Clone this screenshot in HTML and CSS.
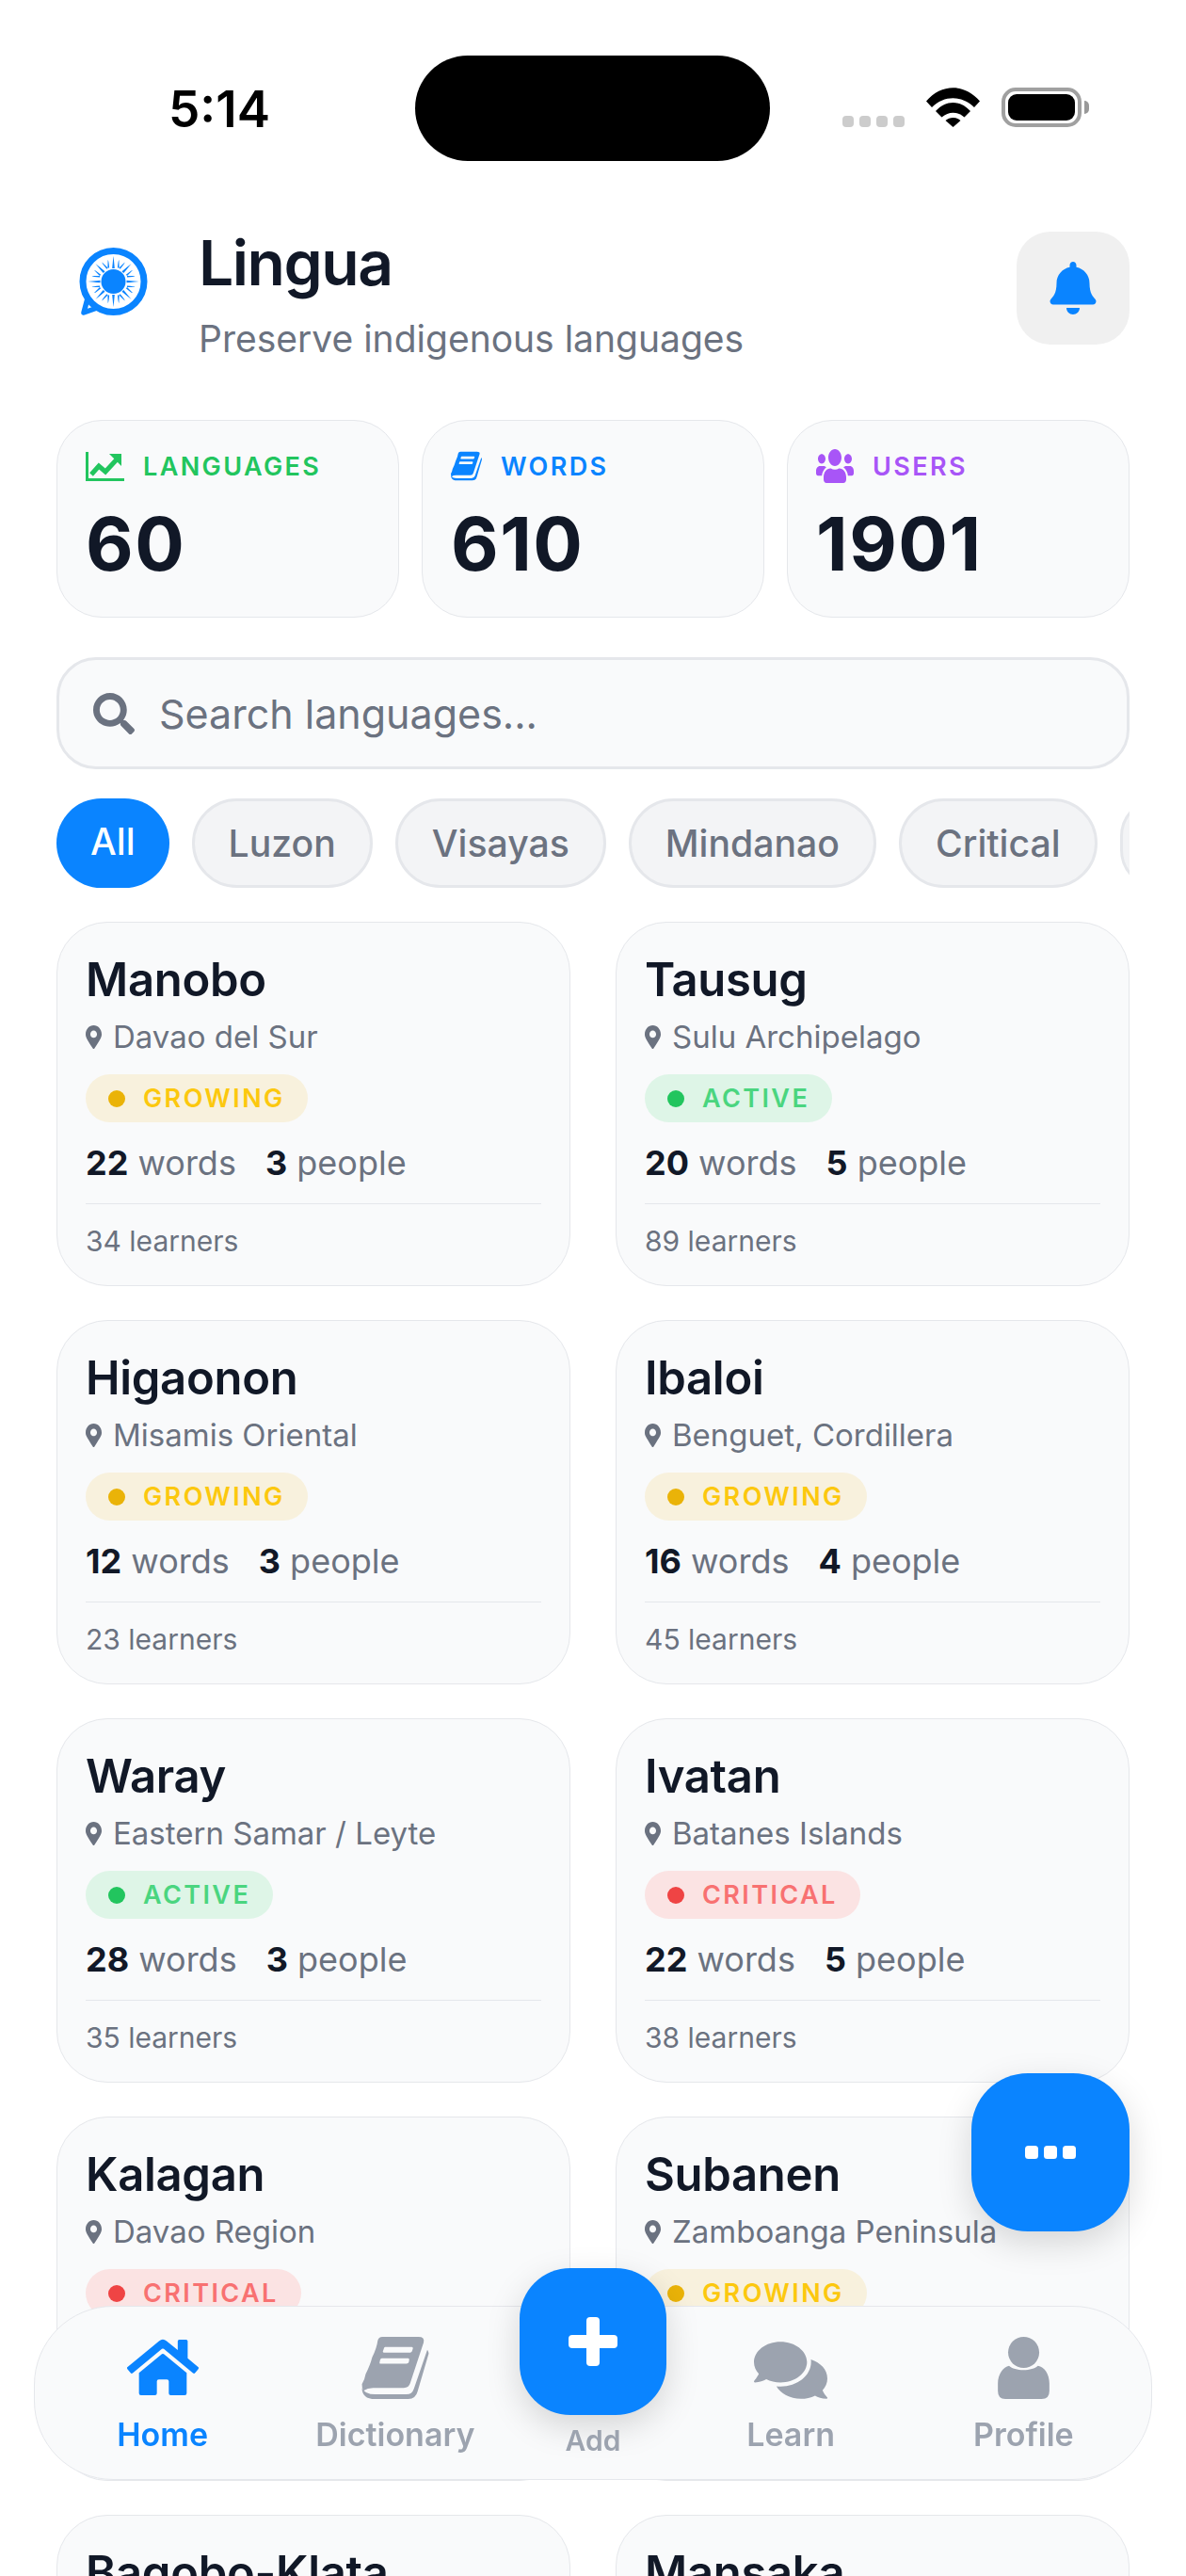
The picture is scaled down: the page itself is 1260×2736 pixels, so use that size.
FILE: index.html
```html
<!DOCTYPE html>
<html lang="en">
<head>
    <meta charset="UTF-8">
    <meta name="viewport" content="width=device-width, initial-scale=1.0">
    <title>Lingua</title>
    <link rel="stylesheet" href="styles.css">
</head>
<body>
    <!-- Shared icons -->
    <svg class="icon-defs" aria-hidden="true">
        <symbol id="icon-book" viewBox="0 0 72 67">
            <path fill="currentColor" fill-rule="evenodd" d="M22 0H61Q68 0 66.500 6L52 50Q50.500 55 45 55H12Q6 55 1.500 58Q0 56 0 51Q3 46 4 40Q9 30 11 22Q16 12 17 4Q18 0 22 0ZM25 11Q24 11 23.500 13L22.500 16Q22.500 17 24 17H52Q53.500 17 54 15.500L55 12.500Q55 11 53.500 11ZM21.500 23Q20 23 19.500 25L19 28Q18.500 29 20 29H48Q50 29 50.500 27.500L51 24.500Q51 23 49.500 23Z"/>
            <path fill="currentColor" d="M70.500 14Q72 16 72 18L60 59Q58 67 50 67H14Q0 67 0 55Q3 62 14 62H48Q54 62 56 56Z"/>
        </symbol>
        <symbol id="icon-pin" viewBox="0 0 384 512" preserveAspectRatio="none">
            <path fill="currentColor" d="M172.268 501.67C26.97 291.031 0 262.429 0 192 0 85.961 85.961 0 192 0s192 85.961 192 192c0 70.429-26.97 99.031-172.268 309.67-9.535 13.774-29.93 13.773-39.464 0zM192 272c44.183 0 80-35.817 80-80s-35.817-80-80-80-80 35.817-80 80 35.817 80 80 80z"/>
        </symbol>
    </svg>

    <div class="status-bar">
        <div class="time">5:14</div>
        <div class="island"></div>
        <div class="status-icons">
            <div class="signal"><span></span><span></span><span></span><span></span></div>
            <svg class="wifi" viewBox="0 0 57 42">
                <path d="M0 14.500C16 -4.500 41 -4.500 57 14.500L51 21C38 8 19 8 6 21Z"/>
                <path d="M10 25C21 13 36 13 47 25L40.500 31.500C33 25 24 25 16.500 31.500Z"/>
                <path d="M20.500 35C25 31 32 31 36.500 35L28.500 42Z"/>
            </svg>
            <div class="battery"><div class="battery-fill"></div></div>
            <div class="battery-nub"></div>
        </div>
    </div>

    <div class="page">
        <header class="app-header">
            <div class="logo">
                <svg viewBox="0 0 74 72" width="74" height="72">
                    <path d="M10 54L6 69L23 63" fill="#fff" stroke="#0a84ff" stroke-width="5.500" stroke-linejoin="round"/>
                    <circle cx="37.500" cy="36" r="32.500" fill="#fff" stroke="#0a84ff" stroke-width="7"/>
                    <circle cx="37.500" cy="36" r="13" fill="#0a84ff"/>
                    <g fill="#0a84ff">
                        <g id="sun-rays">
                            <path d="M36.200 22Q37 13 37.500 9Q38 13 38.800 22Z"/>
                            <path d="M31.400 21.500L31.600 13Q32.600 14 33.100 21.500Z"/>
                            <path d="M43.600 21.500L43.400 13Q42.400 14 41.900 21.500Z"/>
                        </g>
                        <use href="#sun-rays" transform="rotate(45 37.500 36)"/>
                        <use href="#sun-rays" transform="rotate(90 37.500 36)"/>
                        <use href="#sun-rays" transform="rotate(135 37.500 36)"/>
                        <use href="#sun-rays" transform="rotate(180 37.500 36)"/>
                        <use href="#sun-rays" transform="rotate(225 37.500 36)"/>
                        <use href="#sun-rays" transform="rotate(270 37.500 36)"/>
                        <use href="#sun-rays" transform="rotate(315 37.500 36)"/>
                    </g>
                </svg>
            </div>
            <div class="brand">
                <h1>Lingua</h1>
                <p>Preserve indigenous languages</p>
            </div>
            <button class="bell-btn">
                <svg viewBox="0 0 448 512" width="50" height="56">
                    <path fill="#0a84ff" d="M224 512c35.320 0 63.970-28.650 63.970-64H160.030c0 35.350 28.650 64 63.970 64zm215.390-149.710c-19.320-20.760-55.470-51.990-55.470-154.290 0-77.700-54.480-139.900-127.940-155.160V32c0-17.670-14.320-32-31.980-32s-31.980 14.330-31.980 32v20.840C118.560 68.100 64.080 130.300 64.080 208c0 102.300-36.150 133.530-55.470 154.290-6 6.450-8.660 14.160-8.610 21.710.110 16.400 12.980 32 32.100 32h383.800c19.120 0 32-15.600 32.100-32 .050-7.550-2.610-15.270-8.610-21.710z"/>
                </svg>
            </button>
        </header>

        <div class="stats">
            <div class="stat-card">
                <div class="stat-label green">
                    <svg class="icon-chart" viewBox="0 0 41 31">
                        <path d="M1.500 0V29.500H41" fill="none" stroke="currentColor" stroke-width="3"/>
                        <path d="M6 24L14 15L21 21L33 8" fill="none" stroke="currentColor" stroke-width="5"/>
                        <path d="M25 2H38V15Z" fill="currentColor"/>
                    </svg>
                    LANGUAGES
                </div>
                <div class="stat-value">60</div>
            </div>
            <div class="stat-card">
                <div class="stat-label blue">
                    <svg class="icon-words"><use href="#icon-book"/></svg>
                    WORDS
                </div>
                <div class="stat-value">610</div>
            </div>
            <div class="stat-card">
                <div class="stat-label purple">
                    <svg class="icon-users" viewBox="0 32 640 448" preserveAspectRatio="none">
                        <path fill="currentColor" d="M96 224c35.300 0 64-28.700 64-64s-28.700-64-64-64-64 28.700-64 64 28.700 64 64 64zm448 0c35.300 0 64-28.700 64-64s-28.700-64-64-64-64 28.700-64 64 28.700 64 64 64zm32 32h-64c-17.600 0-33.500 7.100-45.100 18.600 40.300 22.100 68.900 62 75.100 109.400h66c17.700 0 32-14.300 32-32v-32c0-35.300-28.700-64-64-64zm-256 0c61.900 0 112-50.100 112-112S381.900 32 320 32 208 82.100 208 144s50.100 112 112 112zm76.800 32h-8.300c-20.800 10-43.900 16-68.500 16s-47.600-6-68.500-16h-8.300C179.600 288 128 339.600 128 403.200V432c0 26.500 21.500 48 48 48h288c26.500 0 48-21.500 48-48v-28.800c0-63.600-51.600-115.200-115.200-115.200zm-223.700-13.400C161.500 263.100 145.600 256 128 256H64c-35.300 0-64 28.700-64 64v32c0 17.700 14.300 32 32 32h65.900c6.300-47.400 34.900-87.300 75.200-109.400z"/>
                    </svg>
                    USERS
                </div>
                <div class="stat-value">1901</div>
            </div>
        </div>

        <div class="search">
            <svg viewBox="0 0 512 512" width="44" height="44">
                <path fill="#6b7280" d="M505 442.700L405.300 343c-4.500-4.500-10.600-7-17-7H372c27.600-35.300 44-79.700 44-128C416 93.100 322.900 0 208 0S0 93.100 0 208s93.100 208 208 208c48.300 0 92.700-16.400 128-44v16.300c0 6.400 2.500 12.500 7 17l99.700 99.700c9.400 9.400 24.600 9.400 33.900 0l28.300-28.300c9.400-9.400 9.400-24.600.1-34zM208 336c-70.700 0-128-57.200-128-128 0-70.700 57.200-128 128-128 70.700 0 128 57.200 128 128 0 70.700-57.200 128-128 128z"/>
            </svg>
            <span>Search languages...</span>
        </div>

        <div class="filters">
            <div class="pill active">All</div>
            <div class="pill">Luzon</div>
            <div class="pill">Visayas</div>
            <div class="pill">Mindanao</div>
            <div class="pill">Critical</div>
            <div class="pill"></div>
        </div>

        <div class="lang-grid">
            <div class="lang-card">
                <h3>Manobo</h3>
                <div class="place"><svg><use href="#icon-pin"/></svg>Davao del Sur</div>
                <div class="badge growing"><i></i>GROWING</div>
                <div class="counts"><span><b>22</b> words</span><span><b>3</b> people</span></div>
                <div class="learners">34 learners</div>
            </div>
            <div class="lang-card">
                <h3>Tausug</h3>
                <div class="place"><svg><use href="#icon-pin"/></svg>Sulu Archipelago</div>
                <div class="badge active"><i></i>ACTIVE</div>
                <div class="counts"><span><b>20</b> words</span><span><b>5</b> people</span></div>
                <div class="learners">89 learners</div>
            </div>
            <div class="lang-card">
                <h3>Higaonon</h3>
                <div class="place"><svg><use href="#icon-pin"/></svg>Misamis Oriental</div>
                <div class="badge growing"><i></i>GROWING</div>
                <div class="counts"><span><b>12</b> words</span><span><b>3</b> people</span></div>
                <div class="learners">23 learners</div>
            </div>
            <div class="lang-card">
                <h3>Ibaloi</h3>
                <div class="place"><svg><use href="#icon-pin"/></svg>Benguet, Cordillera</div>
                <div class="badge growing"><i></i>GROWING</div>
                <div class="counts"><span><b>16</b> words</span><span><b>4</b> people</span></div>
                <div class="learners">45 learners</div>
            </div>
            <div class="lang-card">
                <h3>Waray</h3>
                <div class="place"><svg><use href="#icon-pin"/></svg>Eastern Samar / Leyte</div>
                <div class="badge active"><i></i>ACTIVE</div>
                <div class="counts"><span><b>28</b> words</span><span><b>3</b> people</span></div>
                <div class="learners">35 learners</div>
            </div>
            <div class="lang-card">
                <h3>Ivatan</h3>
                <div class="place"><svg><use href="#icon-pin"/></svg>Batanes Islands</div>
                <div class="badge critical"><i></i>CRITICAL</div>
                <div class="counts"><span><b>22</b> words</span><span><b>5</b> people</span></div>
                <div class="learners">38 learners</div>
            </div>
            <div class="lang-card">
                <h3>Kalagan</h3>
                <div class="place"><svg><use href="#icon-pin"/></svg>Davao Region</div>
                <div class="badge critical"><i></i>CRITICAL</div>
                <div class="counts"></div>
                <div class="learners"></div>
            </div>
            <div class="lang-card">
                <h3>Subanen</h3>
                <div class="place"><svg><use href="#icon-pin"/></svg>Zamboanga Peninsula</div>
                <div class="badge growing"><i></i>GROWING</div>
                <div class="counts"></div>
                <div class="learners"></div>
            </div>
            <div class="lang-card">
                <h3>Bagobo-Klata</h3>
            </div>
            <div class="lang-card">
                <h3>Mansaka</h3>
            </div>
        </div>
    </div>

    <button class="more-btn">
        <svg viewBox="0 0 54 14" width="54" height="14">
            <rect width="14" height="14" rx="3.500"/>
            <rect x="20" width="14" height="14" rx="3.500"/>
            <rect x="40" width="14" height="14" rx="3.500"/>
        </svg>
    </button>

    <nav class="bottom-nav">
        <div class="nav-item current">
            <svg class="nav-home" viewBox="0 32 576 448">
                <path fill="currentColor" d="M280.370 148.260L96 300.110V464a16 16 0 0 0 16 16l112.060-.29a16 16 0 0 0 15.920-16V368a16 16 0 0 1 16-16h64a16 16 0 0 1 16 16v95.640a16 16 0 0 0 16 16.050L464 480a16 16 0 0 0 16-16V300L295.670 148.260a12.190 12.190 0 0 0-15.300 0zM571.600 251.470L488 182.560V44.050a12 12 0 0 0-12-12h-56a12 12 0 0 0-12 12v72.610L318.470 43a48 48 0 0 0-61 0L4.340 251.470a12 12 0 0 0-1.600 16.900l25.500 31A12 12 0 0 0 45.150 301l235.220-193.740a12.190 12.190 0 0 1 15.300 0L530.900 301a12 12 0 0 0 16.900-1.600l25.500-31a12 12 0 0 0-1.700-16.930z"/>
            </svg>
            <span>Home</span>
        </div>
        <div class="nav-item">
            <svg class="nav-book"><use href="#icon-book"/></svg>
            <span>Dictionary</span>
        </div>
        <div class="nav-item add">
            <button class="add-btn">
                <svg viewBox="0 0 52 52" width="52" height="52">
                    <rect x="19" width="14" height="52" rx="4"/>
                    <rect y="19" width="52" height="14" rx="4"/>
                </svg>
            </button>
            <span>Add</span>
        </div>
        <div class="nav-item">
            <svg class="nav-learn" viewBox="0 32 576 448">
                <path fill="currentColor" d="M416 192c0-88.400-93.100-160-208-160S0 103.600 0 192c0 34.300 14.100 65.900 38 92-13.400 30.200-35.500 54.200-35.800 54.500-2.200 2.300-2.800 5.700-1.500 8.700S4.800 352 8 352c36.600 0 66.900-12.300 88.700-25 32.200 15.700 70.300 25 111.300 25 114.900 0 208-71.600 208-160zm122 220c23.900-26 38-57.700 38-92 0-66.900-53.500-124.200-129.300-148.100.9 6.600 1.300 13.300 1.300 20.100 0 105.900-107.700 192-240 192-10.800 0-21.300-.8-31.700-1.900C207.800 439.600 281.800 480 368 480c41 0 79.100-9.200 111.300-25 21.800 12.700 52.100 25 88.700 25 3.200 0 6.100-1.900 7.300-4.800 1.300-3 .7-6.400-1.500-8.700-.3-.3-22.400-24.200-35.800-54.500z"/>
            </svg>
            <span>Learn</span>
        </div>
        <div class="nav-item">
            <svg class="nav-user" viewBox="0 0 55.300 66.700">
                <circle cx="27.700" cy="16.700" r="16.700" fill="currentColor"/>
                <path fill="currentColor" d="M12 31C18 37 37 37 43 31C50 32 55.300 40 55.300 50V58Q55.300 66.700 47 66.700H8Q0 66.700 0 58V50C0 40 6 32 12 31Z"/>
            </svg>
            <span>Profile</span>
        </div>
    </nav>
</body>
</html>
```

FILE: styles.css
```css
* {
    margin: 0;
    padding: 0;
    box-sizing: border-box;
    font-family: 'Inter', 'Liberation Sans', sans-serif;
}

html, body {
    height: 2736px;
    overflow: hidden;
    background-color: #fff;
}

.icon-defs {
    display: none;
}

/* Status bar */
.status-bar {
    display: flex;
    align-items: center;
    height: 112px;
    margin-top: 59px;
    margin-bottom: 75px;
    padding-left: 179px;
}

.time {
    width: 262px;
    padding-top: 2px;
    font-size: 53px;
    font-weight: 600;
    color: #000;
}

.island {
    width: 377px;
    height: 112px;
    border-radius: 56px;
    background-color: #000;
}

.status-icons {
    display: flex;
    align-items: flex-end;
    height: 42px;
    margin-left: 77px;
    margin-bottom: 2px;
}

.signal {
    display: flex;
    gap: 6px;
    margin-right: 23px;
}

.signal span {
    width: 12px;
    height: 12px;
    border-radius: 4px;
    background-color: #ccc;
}

.wifi {
    width: 57px;
    height: 42px;
    margin-right: 23px;
}

.battery {
    width: 85px;
    height: 42px;
    padding: 3px;
    border: 4px solid #a0a0a0;
    border-radius: 15px;
}

.battery-fill {
    height: 100%;
    border-radius: 9px;
    background-color: #000;
}

.battery-nub {
    align-self: center;
    width: 5px;
    height: 14px;
    margin-left: 3px;
    border-radius: 0 5px 5px 0;
    background-color: #999;
}

/* Page */
.page {
    padding: 0 60px;
}

.app-header {
    display: flex;
    height: 120px;
    margin-bottom: 80px;
}

.logo {
    flex: 0 0 120px;
    display: flex;
    justify-content: center;
    padding-top: 17px;
}

.brand {
    flex: 1;
    margin-left: 31px;
}

.brand h1 {
    margin-top: -7px;
    font-size: 66px;
    font-weight: 600;
    line-height: 80px;
    letter-spacing: -1.5px;
    color: #111827;
}

.brand p {
    margin-top: 17px;
    font-size: 39px;
    line-height: 48px;
    color: #6b7280;
}

.bell-btn {
    display: flex;
    align-items: center;
    justify-content: center;
    width: 120px;
    height: 120px;
    border: none;
    border-radius: 36px;
    background-color: #f0f0f0;
}

/* Stat cards */
.stats {
    display: grid;
    grid-template-columns: repeat(3, 1fr);
    gap: 24px;
    margin-bottom: 42px;
}

.stat-card {
    padding: 30px;
    border: 1.5px solid #e5e7eb;
    border-radius: 48px;
    background-color: #f9fafb;
}

.stat-label {
    display: flex;
    align-items: center;
    gap: 20px;
    height: 36px;
    font-size: 27px;
    font-weight: 600;
    letter-spacing: 2.4px;
}

.green { color: #22c55e; }
.blue { color: #0a84ff; }
.purple { color: #a855f7; }

.icon-chart {
    width: 41px;
    height: 31px;
}

.icon-words {
    width: 33px;
    height: 32px;
}

.icon-users {
    width: 40px;
    height: 36px;
}

.stat-value {
    margin-top: 18px;
    font-size: 78px;
    font-weight: 700;
    line-height: 94px;
    letter-spacing: 1.5px;
    color: #111827;
}

/* Search and filters */
.search {
    display: flex;
    align-items: center;
    gap: 26px;
    height: 119px;
    margin-bottom: 31px;
    padding-left: 36px;
    border: 3px solid #e5e7eb;
    border-radius: 42px;
    background-color: #f9fafb;
    font-size: 43px;
    color: #6b7280;
}

.filters {
    display: flex;
    gap: 24px;
    overflow: hidden;
    margin-bottom: 36px;
}

.pill {
    flex: none;
    display: flex;
    align-items: center;
    min-width: 80px;
    height: 95px;
    padding: 0 36px;
    border: 3px solid #e5e7eb;
    border-radius: 48px;
    background-color: #f3f4f6;
    font-size: 39.200px;
    font-weight: 500;
    color: #6b7280;
}

.pill.active {
    padding: 0 36px 5px;
    border: none;
    background-color: #0a84ff;
    color: #fff;
}

/* Language cards */
.lang-grid {
    display: grid;
    grid-template-columns: repeat(2, 1fr);
    gap: 36px 48px;
}

.lang-card {
    height: 387px;
    padding: 32px 30px 30px;
    border: 1.5px solid #e5e7eb;
    border-radius: 54px;
    background-color: #f9fafb;
}

.lang-card h3 {
    font-size: 49px;
    font-weight: 600;
    line-height: 58px;
    letter-spacing: -0.3px;
    color: #111827;
}

.place {
    display: flex;
    align-items: center;
    gap: 12px;
    margin-top: 9px;
    font-size: 33px;
    line-height: 44px;
    color: #6b7280;
}

.place svg {
    width: 17px;
    height: 25px;
}

.badge {
    display: inline-flex;
    align-items: center;
    gap: 19px;
    margin-top: 18px;
    padding: 9px 24px;
    border-radius: 26px;
    font-size: 27px;
    font-weight: 600;
    line-height: 33px;
    letter-spacing: 2.4px;
}

.badge i {
    width: 18px;
    height: 18px;
    border-radius: 50%;
}

.badge.growing {
    background-color: #f8f1dd;
    color: #fcc80e;
}

.badge.growing i {
    background-color: #eab308;
}

.badge.active {
    background-color: #def5e7;
    color: #4ad57f;
}

.badge.active i {
    background-color: #22c55e;
}

.badge.critical {
    background-color: #fbe3e3;
    color: #f87171;
}

.badge.critical i {
    background-color: #ef4444;
}

.counts {
    display: flex;
    gap: 31px;
    height: 47px;
    margin-top: 20px;
    font-size: 36px;
    line-height: 47px;
    color: #6b7280;
}

.counts b {
    font-weight: 700;
    color: #111827;
}

.learners {
    height: 58px;
    margin-top: 19px;
    padding-top: 21px;
    border-top: 1.5px solid #e5e7eb;
    font-size: 30px;
    line-height: 36px;
    color: #6b7280;
}

/* Floating button */
.more-btn {
    position: fixed;
    left: 1032px;
    top: 2202px;
    display: flex;
    align-items: center;
    justify-content: center;
    width: 168px;
    height: 168px;
    border: none;
    border-radius: 60px;
    background-color: #0a84ff;
    fill: #fff;
    box-shadow: 0 12px 36px rgba(0,0,0,0.15);
}

/* Bottom nav */
.bottom-nav {
    position: fixed;
    left: 36px;
    right: 36px;
    top: 2449px;
    display: grid;
    grid-template-columns: 1fr 1fr 173px 1fr 1fr;
    height: 185px;
    padding: 32px 12px 0;
    border: 1.5px solid #e5e7eb;
    border-radius: 84px;
    background-color: #f9fafb;
}

.nav-item {
    display: flex;
    flex-direction: column;
    align-items: center;
    font-size: 34px;
    font-weight: 600;
    color: #9ca3af;
}

.nav-item.current {
    color: #0a84ff;
}

.nav-item svg {
    height: 66px;
}

.nav-item > span {
    margin-top: 18px;
    line-height: 40px;
}

.nav-item .nav-home {
    width: 76px;
    height: 61px;
    margin-top: 2px;
    margin-bottom: 3px;
}

.nav-book {
    width: 72px;
}

.nav-item .nav-learn {
    width: 78px;
    height: 61px;
    margin-top: 5px;
}

.nav-user {
    width: 55px;
}

.nav-item.add {
    margin-top: -73px;
    font-size: 30px;
}

.nav-item.add > span {
    margin-top: 9px;
    line-height: 36px;
}

.add-btn {
    display: flex;
    align-items: center;
    justify-content: center;
    width: 156px;
    height: 156px;
    border: none;
    border-radius: 54px;
    background-color: #0a84ff;
    fill: #fff;
    box-shadow: 0 12px 36px rgba(0,0,0,0.15);
}

.add-btn svg {
    height: 52px;
}
```
